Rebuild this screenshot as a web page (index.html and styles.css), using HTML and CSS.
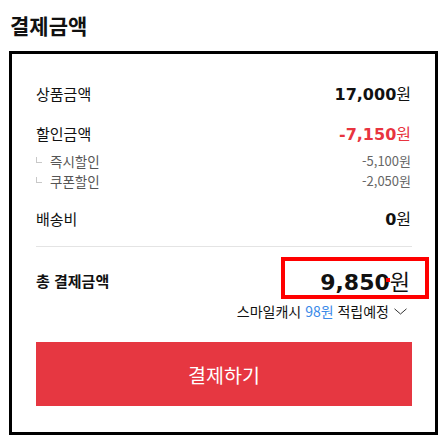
FILE: index.html
```html
<!DOCTYPE html>
<html lang="ko">
<head>
<meta charset="utf-8">
<title>결제금액</title>
<link rel="stylesheet" href="styles.css">
</head>
<body>
<h2 class="title">결제금액</h2>
<div class="box">
  <div class="row row-main">
    <span class="label">상품금액</span>
    <span class="val"><b class="num">17,000</b><span class="won">원</span></span>
  </div>
  <div class="row row-main row-discount">
    <span class="label">할인금액</span>
    <span class="val red"><b class="num">-7,150</b><span class="won">원</span></span>
  </div>
  <div class="subs">
    <div class="row row-sub">
      <span class="label sub-label"><i class="mark"></i>즉시할인</span>
      <span class="sub-val">-5,100원</span>
    </div>
    <div class="row row-sub">
      <span class="label sub-label"><i class="mark"></i>쿠폰할인</span>
      <span class="sub-val">-2,050원</span>
    </div>
  </div>
  <div class="row row-main row-ship">
    <span class="label">배송비</span>
    <span class="val"><b class="num">0</b><span class="won">원</span></span>
  </div>
  <div class="sep"></div>
  <div class="row row-total">
    <span class="label total-label">총 결제금액</span>
    <span class="total-val"><b class="num">9,850</b><span class="won">원</span><i class="dot"></i><i class="highlight"></i></span>
  </div>
  <div class="cash">스마일캐시 <span class="blue">98원</span> 적립예정<svg class="chev" width="13" height="7" viewBox="0 0 13 7"><polyline points="0.5,0.8 6.5,6 12.5,0.8" fill="none" stroke="#333" stroke-width="1"/></svg></div>
  <button class="pay">결제하기</button>
</div>
</body>
</html>
```
FILE: styles.css
```css
html, body {
  margin: 0;
  padding: 0;
  background: #fff;
}
body {
  width: 440px;
  font-family: "Noto Sans CJK KR", "Noto Sans", sans-serif;
  color: #111;
}
.title {
  margin: 0 0 14px 0;
  padding: 13px 0 0 10px;
  font-size: 21px;
  line-height: 24px;
  font-weight: bold;
  color: #111;
}
.box {
  box-sizing: border-box;
  width: 429px;
  height: 384px;
  margin-left: 9px;
  border: 3px solid #000;
  padding: 30px 23px 0 24px;
  display: flex;
  flex-direction: column;
}
.row {
  display: flex;
  justify-content: space-between;
  align-items: center;
}
.row-main {
  height: 20px;
  line-height: 20px;
}
.label {
  font-size: 15px;
  color: #111;
}
.row-discount {
  margin-top: 20px;
}
.val {
  display: flex;
  align-items: baseline;
  font-size: 16px;
  margin-right: 1px;
}
.num {
  font-family: "DejaVu Sans", sans-serif;
  font-weight: bold;
}
.won {
  font-family: "Noto Sans CJK KR", sans-serif;
  font-weight: normal;
}
.red {
  color: #e8343f;
}
.subs {
  margin-top: 7px;
}
.row-sub {
  height: 20px;
  line-height: 20px;
}
.sub-label {
  display: flex;
  align-items: center;
  font-size: 13.5px;
  color: #555;
}
.mark {
  display: block;
  width: 5px;
  height: 5px;
  border-left: 1px solid #c8c8c8;
  border-bottom: 1px solid #c8c8c8;
  margin: 0 8px 2px 0;
}
.sub-val {
  font-size: 13px;
  color: #666;
  margin-right: 1px;
}
.row-ship {
  margin-top: 18px;
}
.sep {
  height: 1px;
  background: #e4e4e4;
  margin-top: 17px;
}
.row-total {
  margin-top: 19px;
  height: 30px;
  line-height: 30px;
}
.total-label {
  font-weight: bold;
}
.total-val {
  position: relative;
  display: flex;
  align-items: baseline;
  font-size: 22px;
  margin-right: 2px;
}
.dot {
  position: absolute;
  right: 20px;
  top: 13px;
  width: 4px;
  height: 4px;
  background: #ff0000;
  z-index: 2;
}
.highlight {
  position: absolute;
  right: -19px;
  top: -8px;
  width: 148px;
  height: 42px;
  box-sizing: border-box;
  border: 4px solid #ff0000;
}
.cash {
  margin-top: 6px;
  height: 18px;
  line-height: 18px;
  font-size: 14px;
  color: #111;
  display: flex;
  justify-content: flex-end;
  align-items: center;
  white-space: pre;
  margin-right: 5px;
}
.blue {
  color: #3a8ae8;
}
.chev {
  margin-left: 5px;
  display: block;
}
.pay {
  margin-top: 22px;
  height: 64px;
  width: 376px;
  border: 0;
  background: #e63741;
  color: #fff;
  font-family: "Noto Sans CJK KR", sans-serif;
  font-size: 19.5px;
  padding: 0;
  cursor: pointer;
}
```
